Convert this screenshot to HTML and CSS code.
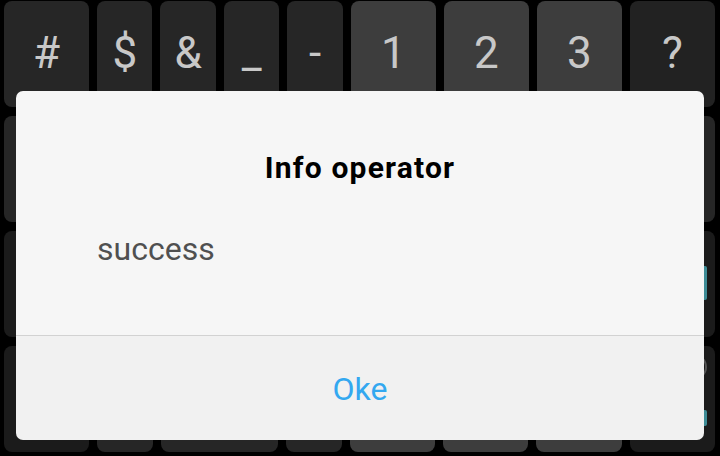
FILE: index.html
```html
<!DOCTYPE html>
<html lang="en">
<head>
  <meta charset="UTF-8" />
  <title>Info operator</title>
  <link rel="stylesheet" href="styles.css">
</head>
<body>

  <!-- Keyboard behind the dialog -->
  <div class="keyboard">
    <div class="row">
      <div class="key wide">#</div>
      <div class="key">$</div>
      <div class="key">&amp;</div>
      <div class="key">_</div>
      <div class="key">-</div>
      <div class="key wide num">1</div>
      <div class="key wide num">2</div>
      <div class="key wide num">3</div>
      <div class="key wide dark">?</div>
    </div>
    <div class="row">
      <div class="key wide"></div>
      <div class="key"></div>
      <div class="key"></div>
      <div class="key"></div>
      <div class="key"></div>
      <div class="key wide num"></div>
      <div class="key wide num"></div>
      <div class="key wide num"></div>
      <div class="key wide"></div>
    </div>
    <div class="row">
      <div class="key wide darker"></div>
      <div class="key"></div>
      <div class="key"></div>
      <div class="key"></div>
      <div class="key"></div>
      <div class="key wide num"></div>
      <div class="key wide num"></div>
      <div class="key wide num"></div>
      <div class="key wide darker enter"><span class="teal"></span></div>
    </div>
    <div class="row">
      <div class="key wide darker"></div>
      <div class="key"></div>
      <div class="key space"></div>
      <div class="key"></div>
      <div class="key wide num"></div>
      <div class="key wide num"></div>
      <div class="key wide num"></div>
      <div class="key wide darker extra">
        <span class="ring"></span>
        <span class="teal short"></span>
      </div>
    </div>
  </div>

  <!-- Dialog -->
  <div class="dialog">
    <div class="dialog-body">
      <h2 class="dialog-title">Info operator</h2>
      <p class="dialog-msg">success</p>
    </div>
    <div class="dialog-footer">
      <button class="ok-btn">Oke</button>
    </div>
  </div>

</body>
</html>
```

FILE: styles.css
```css
body {
  margin: 0;
  background: #000;
  font-family: Roboto, "Liberation Sans", Arial, sans-serif;
  width: 720px;
  height: 456px;
  overflow: hidden;
}
.keyboard {
  display: flex;
  flex-direction: column;
  gap: 9px;
  padding: 1px 5px 0 4px;
}
.row {
  display: flex;
  gap: 8px;
  height: 106px;
}
.key {
  width: 56px;
  background: #262626;
  border-radius: 8px;
  color: #c8c8c8;
  font-size: 44px;
  display: flex;
  align-items: center;
  justify-content: center;
  padding-bottom: 2px;
  box-sizing: border-box;
}
.key.wide {
  width: 86px;
}
.key.num {
  background: #3d3d3d;
}
.key.dark {
  background: #222;
}
.key.darker {
  background: #1b1b1b;
}
.key.space {
  width: 118px;
}
.enter {
  justify-content: flex-end;
  padding-right: 8px;
}
.teal {
  display: block;
  width: 18px;
  height: 34px;
  background: #3e8c96;
  border-radius: 2px;
}
.extra {
  flex-direction: column;
  align-items: flex-end;
  justify-content: flex-start;
  padding: 8px 8px 0 0;
  gap: 30px;
}
.ring {
  display: block;
  width: 22px;
  height: 22px;
  border: 2px solid #555;
  border-radius: 50%;
}
.teal.short {
  height: 16px;
}
.dialog {
  position: absolute;
  left: 16px;
  top: 91px;
  width: 688px;
  height: 349px;
  border-radius: 7px;
  overflow: hidden;
  display: flex;
  flex-direction: column;
}
.dialog-body {
  background: #f6f6f6;
  height: 244px;
  border-bottom: 1px solid #d2d2d2;
}
.dialog-title {
  margin: 0;
  padding-top: 57px;
  text-align: center;
  font-size: 30px;
  font-weight: bold;
  letter-spacing: 1.2px;
  color: #000;
  line-height: 40px;
}
.dialog-msg {
  margin: 0;
  padding: 41px 0 0 81px;
  font-size: 32px;
  color: #505050;
  line-height: 40px;
}
.dialog-footer {
  flex: 1;
  background: #f1f1f1;
  display: flex;
  align-items: center;
  justify-content: center;
}
.ok-btn {
  background: none;
  border: none;
  font-family: inherit;
  font-size: 32px;
  color: #33a8f0;
  padding: 2px 0 0;
  cursor: pointer;
}
```
